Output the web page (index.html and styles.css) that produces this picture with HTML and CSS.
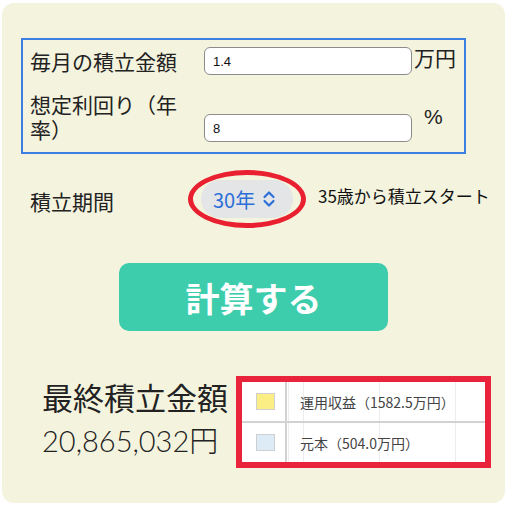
FILE: index.html
```html
<!DOCTYPE html>
<html lang="ja">
<head>
    <meta charset="UTF-8">
    <meta name="viewport" content="width=device-width, initial-scale=1.0">
    <title>積立シミュレーション</title>
    <link rel="stylesheet" href="styles.css">
</head>
<body>
    <div class="card">
        <div class="inputs">
            <div class="row row-top">
                <label class="label" for="monthly">毎月の積立金額</label>
                <input class="field" type="text" id="monthly" value="1.4">
                <span class="unit">万円</span>
            </div>
            <div class="row row-bottom">
                <label class="label" for="rate">想定利回り（年率）</label>
                <input class="field" type="text" id="rate" value="8">
                <span class="unit unit-pct">%</span>
            </div>
        </div>

        <div class="period">
            <span class="label">積立期間</span>
            <span class="ring">
                <span class="select">30年
                    <svg class="chevron" width="14" height="18" viewBox="0 0 14 18">
                        <path d="M2.5 7 L7 2.5 L11.5 7 M2.5 11 L7 15.5 L11.5 11" fill="none" stroke="#2c6fd8" stroke-width="2.2" stroke-linecap="round" stroke-linejoin="round"/>
                    </svg>
                </span>
            </span>
            <span class="note">35歳から積立スタート</span>
        </div>

        <button class="calc">計算する</button>

        <div class="result">
            <div class="total">
                <div class="total-title">最終積立金額</div>
                <div class="total-value">20,865,032円</div>
            </div>
            <div class="legend">
                <table>
                    <tr>
                        <td class="swatch-cell"><span class="swatch swatch-gain"></span></td>
                        <td class="legend-text">運用収益（1582.5万円）</td>
                    </tr>
                    <tr>
                        <td class="swatch-cell"><span class="swatch swatch-base"></span></td>
                        <td class="legend-text">元本（504.0万円）</td>
                    </tr>
                </table>
            </div>
        </div>
    </div>
</body>
</html>
```

FILE: styles.css
```css
body {
    margin: 0;
    padding: 3px 0 0 2px;
    background-color: #fff;
    font-family: "Noto Sans CJK JP", "Noto Sans", sans-serif;
    color: #222;
}
.card {
    box-sizing: border-box;
    width: 503px;
    height: 500px;
    padding-top: 35px;
    background-color: #f4f3de;
    border-radius: 12px;
}
.inputs {
    box-sizing: border-box;
    width: 445px;
    margin-left: 19px;
    padding: 7px 0 10px 7px;
    border: 2px solid #3b7fe3;
}
.row {
    display: flex;
}
.row-top {
    align-items: center;
    height: 28px;
}
.row-bottom {
    align-items: flex-end;
    margin-top: 17px;
}
.label {
    width: 160px;
    margin-right: 14px;
    font-size: 21px;
    line-height: 25px;
    color: #222;
}
.field {
    box-sizing: border-box;
    width: 208px;
    height: 28px;
    padding: 0 8px;
    border: 1px solid #8c8c8c;
    border-radius: 6px;
    background: #fff;
    font-family: "Liberation Sans", Arial, sans-serif;
    font-size: 13px;
    color: #111;
}
.unit {
    margin-left: 2px;
    font-size: 21px;
    line-height: 25px;
    align-self: center;
    margin-top: -8px;
}
.unit-pct {
    margin-left: 12px;
    margin-top: -2px;
    font-family: "Liberation Sans", Arial, sans-serif;
}
.period {
    display: flex;
    align-items: center;
    margin-top: 16px;
    padding-left: 28px;
}
.period .label {
    width: 158px;
    margin-right: 0;
    margin-top: 4px;
}
.ring {
    display: inline-flex;
    padding: 5px 8px;
    border: 5px solid #e8202f;
    border-radius: 50%;
}
.select {
    box-sizing: border-box;
    display: inline-flex;
    align-items: center;
    width: 92px;
    height: 38px;
    padding-left: 12px;
    border-radius: 19px;
    background-color: #e3e5e6;
    color: #2c6fd8;
    font-size: 20px;
}
.chevron {
    margin-left: 7px;
}
.note {
    margin-left: 12px;
    margin-top: -8px;
    font-size: 17px;
    color: #111;
    white-space: nowrap;
}
.calc {
    display: block;
    width: 269px;
    height: 68px;
    margin: 35px auto 0;
    border: none;
    border-radius: 10px;
    background-color: #3dcdac;
    color: #fff;
    font-family: "Noto Sans CJK JP", sans-serif;
    font-size: 34px;
    font-weight: bold;
}
.result {
    display: flex;
    align-items: flex-start;
    margin-top: 45px;
    padding-left: 40px;
}
.total {
    width: 194px;
    margin-top: -1px;
}
.total-title {
    font-size: 31px;
    line-height: 44px;
}
.total-value {
    font-family: "Lato", "Liberation Sans", "Noto Sans CJK JP", sans-serif;
    font-weight: 300;
    font-size: 29px;
    line-height: 44px;
}
.legend {
    box-sizing: border-box;
    width: 255px;
    height: 92px;
    border: 6px solid #e8233b;
    background-color: #fff;
    background-image: repeating-linear-gradient(90deg, #ececec 0 1px, transparent 1px 76px);
    background-position: 61px 0;
}
.legend table {
    width: 100%;
    height: 100%;
    border-collapse: collapse;
}
.legend tr:first-child td {
    border-bottom: 2px solid #d2d2d2;
}
.swatch-cell {
    width: 44px;
    padding: 0 0 0 14px;
    border-right: 2px solid #d2d2d2;
    box-sizing: border-box;
}
.swatch {
    display: block;
    width: 17px;
    height: 15px;
    border: 1px solid #cfcfcf;
}
.swatch-gain {
    background-color: #fbee85;
}
.swatch-base {
    background-color: #dcebf6;
}
.legend-text {
    padding-left: 13px;
    font-size: 14px;
    color: #444;
}
```
